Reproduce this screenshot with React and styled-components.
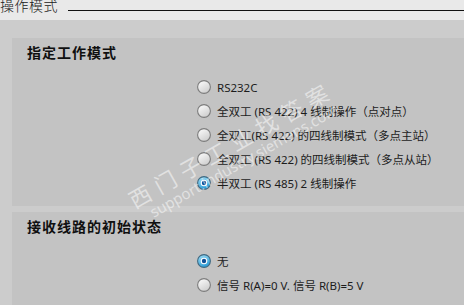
import React from 'react';
import styled, { createGlobalStyle } from 'styled-components';

const GlobalStyle = createGlobalStyle`
  body {
    margin: 0;
    background: #cccccc;
    font-family: "Noto Sans", "Noto Sans CJK SC", sans-serif;
    color: #1c1c1c;
  }
`;

const modes = [
  'RS232C',
  '全双工 (RS 422) 4 线制操作（点对点）',
  '全双工(RS 422) 的四线制模式（多点主站）',
  '全双工 (RS 422) 的四线制模式（多点从站）',
  '半双工 (RS 485) 2 线制操作',
];

const lineStates = [
  '无',
  '信号 R(A)=0 V. 信号 R(B)=5 V',
];

const Radio = ({ checked }) => (
  <RadioIcon width="14" height="14" viewBox="0 0 14 14">
    <defs>
      <linearGradient id="off" x1="0" y1="0" x2="0.6" y2="1">
        <stop offset="0" stopColor="#ffffff" />
        <stop offset="1" stopColor="#cfcfcf" />
      </linearGradient>
      <linearGradient id="on" x1="0" y1="0" x2="0.4" y2="1">
        <stop offset="0" stopColor="#a6e2f8" />
        <stop offset="1" stopColor="#2f9fd8" />
      </linearGradient>
    </defs>
    {checked ? (
      <>
        <circle cx="7" cy="7" r="6.4" fill="url(#on)" stroke="#3f6880" strokeWidth="1.1" />
        <circle cx="7" cy="7" r="3.3" fill="#ffffff" />
        <circle cx="7" cy="7" r="2.2" fill="#0f4f96" />
      </>
    ) : (
      <circle cx="7" cy="7" r="6.4" fill="url(#off)" stroke="#7c7c7c" strokeWidth="1.1" />
    )}
  </RadioIcon>
);

export default function App() {
  return (
    <>
      <GlobalStyle />
      <Page>
        <Header>
          <HeaderTitle>操作模式</HeaderTitle>
          <HeaderRule />
        </Header>
        <Body>
          <Panel>
            <PanelTitle>指定工作模式</PanelTitle>
            <Options>
              {modes.map((m, i) => (
                <Option key={m}>
                  <Radio checked={i === 4} />
                  <span>{m}</span>
                </Option>
              ))}
            </Options>
          </Panel>
          <Panel>
            <PanelTitle>接收线路的初始状态</PanelTitle>
            <Options>
              {lineStates.map((m, i) => (
                <Option key={m}>
                  <Radio checked={i === 0} />
                  <span>{m}</span>
                </Option>
              ))}
            </Options>
          </Panel>
        </Body>
        <Watermark>
          <WatermarkBig>西门子工业找答案</WatermarkBig>
          <WatermarkSmall>support.industry.siemens.com</WatermarkSmall>
        </Watermark>
      </Page>
    </>
  );
}

// STYLED COMPONENTS
const Page = styled.div`
  position: relative;
  width: 464px;
  height: 305px;
  overflow: hidden;
  background: #cccccc;
`;

const Header = styled.div`
  display: flex;
  align-items: flex-start;
  height: 20px;
  background: #e9e9e9;
  overflow: hidden;
`;

const HeaderTitle = styled.div`
  margin-top: -5px;
  font-family: "Noto Sans CJK SC", sans-serif;
  font-size: 14px;
  line-height: 20px;
  font-weight: 300;
  letter-spacing: 0.5px;
  color: #202020;
  white-space: nowrap;
`;

const HeaderRule = styled.div`
  flex: 1;
  height: 1px;
  margin: 10px 0 0 10px;
  background: #111111;
`;

const Body = styled.div`
  display: flex;
  flex-direction: column;
  gap: 6px;
  padding: 18px 0 0 12px;
`;

const Panel = styled.section`
  background: #c3c3c3;
  padding: 2px 0 11px 15px;
`;

const PanelTitle = styled.h2`
  margin: 0;
  height: 24px;
  line-height: 24px;
  font-family: "Noto Sans CJK SC", sans-serif;
  font-size: 14px;
  font-weight: 700;
  letter-spacing: 1px;
  color: #101010;
`;

const Options = styled.div`
  display: flex;
  flex-direction: column;
  margin-top: 11px;
  padding-left: 170px;
`;

const Option = styled.label`
  display: flex;
  align-items: center;
  gap: 6px;
  height: 24px;
  font-size: 11.5px;
  white-space: nowrap;
  color: #1c1c1c;
`;

const RadioIcon = styled.svg`
  flex: none;
  display: block;
`;

const Watermark = styled.div`
  position: absolute;
  left: 124px;
  top: 190px;
  transform-origin: 0 0;
  transform: rotate(-29.5deg);
  color: rgba(255, 255, 255, 0.5);
  pointer-events: none;
  white-space: nowrap;
  font-family: "Noto Sans CJK SC", sans-serif;
`;

const WatermarkBig = styled.div`
  font-size: 22px;
  line-height: 24px;
  letter-spacing: 7px;
`;

const WatermarkSmall = styled.div`
  margin-left: 12px;
  font-family: "Noto Sans", sans-serif;
  font-size: 15px;
  line-height: 18px;
`;
